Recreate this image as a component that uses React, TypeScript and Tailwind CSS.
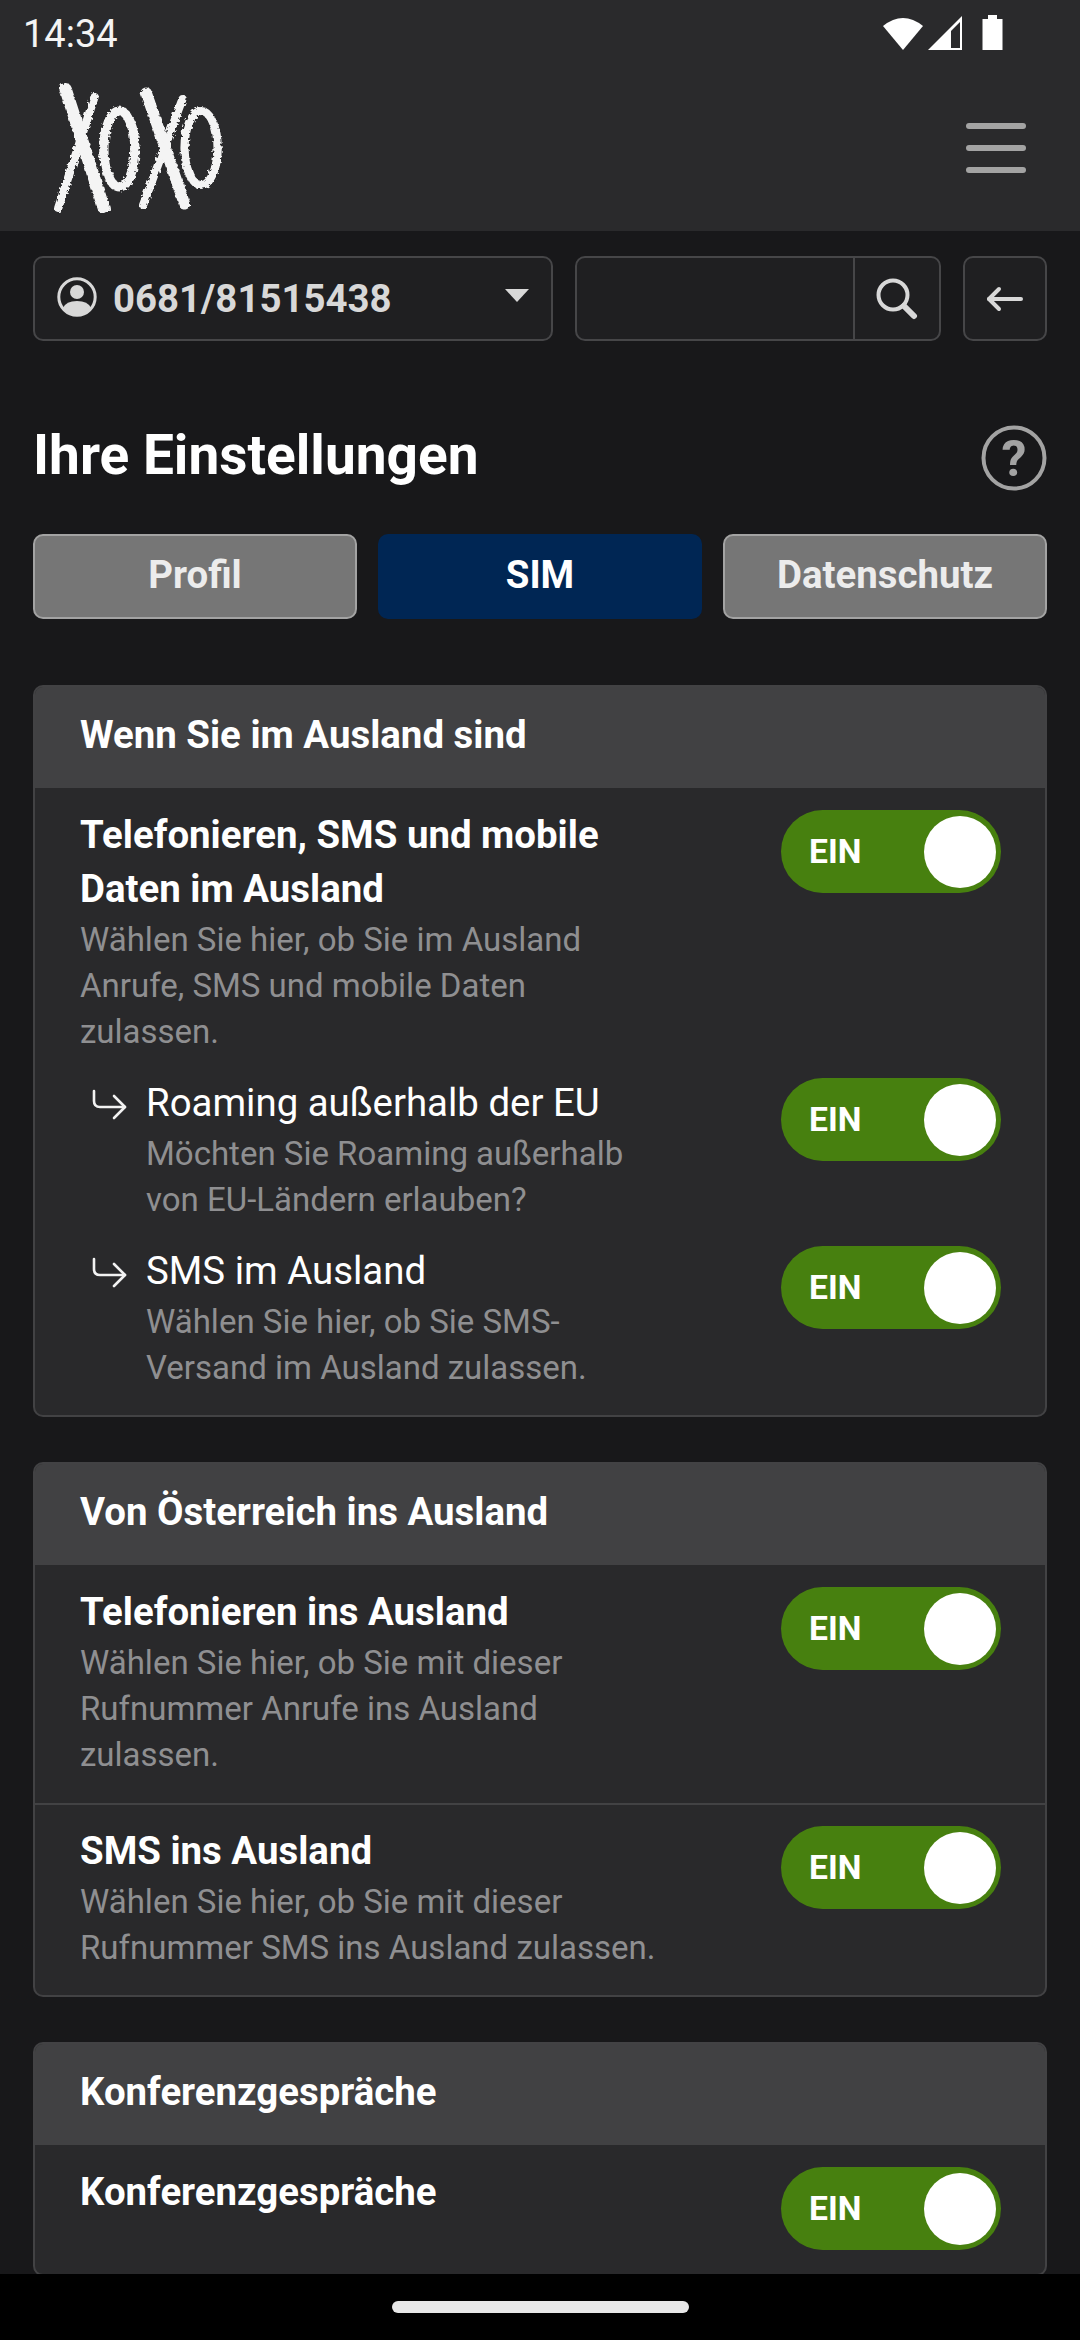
import React from "react";

function Toggle() {
  return (
    <div className="mt-[2px] flex h-[83px] w-[220px] shrink-0 items-center rounded-full bg-[#47800f] pl-[28px] pr-[5px]">
      <span className="mt-[1px] text-[33.6px] font-bold text-white">EIN</span>
      <span className="ml-auto h-[72px] w-[72px] rounded-full bg-white" />
    </div>
  );
}

function SubArrow() {
  return (
    <svg width="36" height="32" viewBox="0 0 36 32" fill="none" stroke="#f2f2f2" strokeWidth="2.6" strokeLinecap="round" strokeLinejoin="round" className="mt-[13px] ml-[12px] mr-[18px] shrink-0">
      <path d="M2 2v10q0 6 6 6h25" />
      <path d="M22 7l11 11-11 11" />
    </svg>
  );
}

function Desc({ children }: { children: React.ReactNode }) {
  return <p className="translate-y-[1px] text-[33px] leading-[46px] text-[#8f8f91]">{children}</p>;
}

function Row({ title, desc, bold = true, sub = false, divider = false, className = "" }: { title: string; desc?: React.ReactNode; bold?: boolean; sub?: boolean; divider?: boolean; className?: string }) {
  return (
    <div className={`flex items-start justify-between pl-[45px] pr-[44px] ${divider ? "border-t-2 border-[#424244]" : ""} ${className}`}>
      <div className="flex">
        {sub && <SubArrow />}
        <div className={sub ? "w-[514px]" : "w-[580px]"}>
          <h3 className={`text-[38.4px] leading-[54px] text-white ${bold ? "font-bold" : "font-normal"}`}>{title}</h3>
          {desc && <Desc>{desc}</Desc>}
        </div>
      </div>
      <Toggle />
    </div>
  );
}

function Card({ title, children, className = "" }: { title: string; children: React.ReactNode; className?: string }) {
  return (
    <section className={`rounded-[10px] border-2 border-[#424244] bg-[#29292b] ${className}`}>
      <h2 className="flex h-[101px] items-center rounded-t-[8px] bg-[#414143] pb-[5px] pl-[45px] text-[38.4px] font-bold text-white">{title}</h2>
      {children}
    </section>
  );
}

function Logo() {
  return (
    <svg width="178" height="132" viewBox="48 80 172 132" preserveAspectRatio="none" fill="none" stroke="#f4f4f4" strokeLinecap="round">
      <filter id="rough" x="-10%" y="-10%" width="120%" height="120%">
        <feTurbulence type="fractalNoise" baseFrequency="0.35" numOctaves="2" seed="4" />
        <feDisplacementMap in="SourceGraphic" scale="5" />
      </filter>
      <g filter="url(#rough)">
        <path d="M63 88L100 207" strokeWidth="12" />
        <path d="M91 96L56 207" strokeWidth="8" />
        <ellipse cx="115" cy="148" rx="15" ry="38" strokeWidth="9" />
        <path d="M141 92L178 203" strokeWidth="11" />
        <path d="M176 98L138 204" strokeWidth="8" />
        <ellipse cx="194" cy="147" rx="16" ry="37" strokeWidth="8" />
      </g>
    </svg>
  );
}

export default function App() {
  return (
    <div className="flex h-[2340px] w-[1080px] flex-col overflow-hidden bg-[#18181a] font-['Roboto',sans-serif]">
      <header className="h-[231px] shrink-0 bg-[#2a2a2c]">
        <div className="flex h-[66px] items-center justify-between pl-[23px] pr-[77px]">
          <span className="mt-[2px] text-[38px] leading-none text-[#f4f4f4]">14:34</span>
          <div className="flex items-center">
            <svg width="42" height="36" viewBox="0 0 42 36" fill="white"><path d="M1 11Q21 -5 41 11L21 35Z" /></svg>
            <svg width="34" height="36" viewBox="0 0 34 36" className="ml-[4px]"><path d="M0 35L34 1V35Z" fill="white" /><path d="M23 16L32 7V33H23Z" fill="#2a2a2c" /></svg>
            <svg width="21" height="36" viewBox="0 0 21 36" fill="white" className="ml-[20px]"><path d="M6 0H15V4H20.500V35H0.500V4H6Z" /></svg>
          </div>
        </div>
        <div className="flex items-start justify-between pl-[50px] pr-[54px]">
          <div className="mt-[15px]"><Logo /></div>
          <div className="mt-[57px] flex flex-col gap-[16px]">
            <span className="h-[6px] w-[60px] rounded-full bg-[#a3a3a3]" />
            <span className="h-[6px] w-[60px] rounded-full bg-[#a3a3a3]" />
            <span className="h-[6px] w-[60px] rounded-full bg-[#a3a3a3]" />
          </div>
        </div>
      </header>

      <main className="flex-1 overflow-hidden px-[33px] pt-[25px]">
        <div className="flex h-[85px] gap-[22px]">
          <div className="flex w-[520px] items-center rounded-[10px] border-2 border-[#464648] bg-[#1f1f21] pl-[22px] pr-[22px]">
            <svg width="40" height="40" viewBox="0 0 40 40" fill="none" className="-mt-[3px] shrink-0">
              <circle cx="20" cy="20" r="18.200" stroke="#d8d8d8" strokeWidth="3" />
              <circle cx="20" cy="15" r="7" fill="#d8d8d8" />
              <path d="M6 31Q9 24 20 24Q31 24 34 31Q28 38.500 20 38.500Q12 38.500 6 31Z" fill="#d8d8d8" />
            </svg>
            <span className="ml-[16px] text-[38.4px] font-bold text-[#d8d8d8]">0681/81515438</span>
            <svg width="24" height="13" viewBox="0 0 24 13" fill="#d8d8d8" className="ml-auto -mt-[6px]"><path d="M0 0H24L12 13Z" /></svg>
          </div>
          <div className="flex w-[366px] overflow-hidden rounded-[10px] border-2 border-[#464648] bg-[#1f1f21]">
            <div className="flex-1 border-r-2 border-[#464648]" />
            <div className="flex w-[84px] items-center justify-center">
              <svg width="42" height="42" viewBox="0 0 42 42" fill="none" stroke="#d8d8d8" strokeLinecap="round">
                <circle cx="17" cy="17" r="14.500" strokeWidth="4" />
                <path d="M28 28L38 38" strokeWidth="6" />
              </svg>
            </div>
          </div>
          <div className="flex w-[84px] items-center justify-center rounded-[10px] border-2 border-[#464648] bg-[#1f1f21]">
            <svg width="38" height="26" viewBox="0 0 38 26" fill="none" stroke="#d8d8d8" strokeWidth="4" strokeLinecap="round" strokeLinejoin="round">
              <path d="M3 13H35" />
              <path d="M13 3L3 13L13 23" />
            </svg>
          </div>
        </div>

        <div className="mt-[84px] flex h-[66px] items-center justify-between">
          <h1 className="-mt-[5px] text-[55px] font-bold leading-none text-white">Ihre Einstellungen</h1>
          <svg width="66" height="66" viewBox="0 0 66 66" fill="none">
            <circle cx="33" cy="33" r="30.500" stroke="#a3a3a3" strokeWidth="4" />
            <text x="33" y="51" textAnchor="middle" fill="#a3a3a3" fontSize="50" fontWeight="700" fontFamily="Roboto, sans-serif">?</text>
          </svg>
        </div>

        <div className="mt-[43px] grid h-[85px] grid-cols-3 gap-[21px]">
          <div className="flex items-center justify-center rounded-[10px] border-2 border-[#a3a3a3] bg-[#767676] pb-[3px] text-[38.4px] font-bold text-[#ececec]">Profil</div>
          <div className="flex items-center justify-center rounded-[10px] bg-[#002654] pb-[3px] text-[38.4px] font-bold text-white">SIM</div>
          <div className="flex items-center justify-center rounded-[10px] border-2 border-[#a3a3a3] bg-[#767676] pb-[3px] text-[38.4px] font-bold text-[#ececec]">Datenschutz</div>
        </div>

        <Card title="Wenn Sie im Ausland sind" className="mt-[66px]">
          <Row className="pt-[20px]" title="Telefonieren, SMS und mobile Daten im Ausland" desc={<>Wählen Sie hier, ob Sie im Ausland Anrufe, SMS und mobile Daten zulassen.</>} />
          <Row className="mt-[22px]" sub bold={false} title="Roaming außerhalb der EU" desc={<>Möchten Sie Roaming außerhalb von EU-Ländern erlauben?</>} />
          <Row className="mt-[22px] pb-[25px]" sub bold={false} title="SMS im Ausland" desc={<>Wählen Sie hier, ob Sie SMS-Versand im Ausland zulassen.</>} />
        </Card>

        <Card title="Von Österreich ins Ausland" className="mt-[45px]">
          <Row className="pt-[20px] pb-[26px]" title="Telefonieren ins Ausland" desc={<>Wählen Sie hier, ob Sie mit dieser Rufnummer Anrufe ins Ausland zulassen.</>} />
          <Row divider className="pt-[19px] pb-[25px]" title="SMS ins Ausland" desc={<>Wählen Sie hier, ob Sie mit dieser Rufnummer SMS ins Ausland zulassen.</>} />
        </Card>

        <Card title="Konferenzgespräche" className="mt-[45px]">
          <Row className="pt-[20px] pb-[24px]" title="Konferenzgespräche" />
        </Card>
      </main>

      <footer className="flex h-[66px] shrink-0 items-center justify-center bg-black">
        <span className="h-[12px] w-[297px] rounded-full bg-[#e8e8e8]" />
      </footer>
    </div>
  );
}
